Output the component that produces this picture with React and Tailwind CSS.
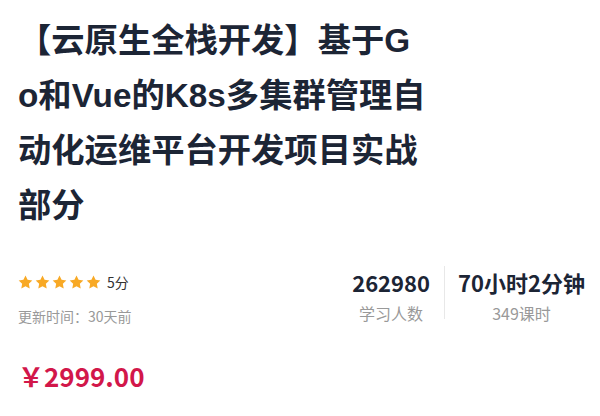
import React from "react";

const Star = () => (
  <svg width="15" height="14" viewBox="0 0 24 23" className="block">
    <path
      d="M12 0.8l3.4 7.1 7.8 1-5.7 5.4 1.4 7.7L12 18.3 5.1 22l1.4-7.7L0.8 8.9l7.8-1z"
      fill="#f8a925"
    />
  </svg>
);

export default function App() {
  const font = { fontFamily: '"Noto Sans CJK SC", "Noto Sans", sans-serif' };
  const titleFont = { fontFamily: '"Liberation Sans", "Noto Sans CJK SC", sans-serif' };
  return (
    <div className="w-[600px] h-[416px] bg-white overflow-hidden" style={font}>
      <div className="pl-[18px] pt-[13px]">
        <h1
          className="w-[409px] text-[33.3px] leading-[55px] font-bold text-[#1c2535] break-all"
          style={titleFont}
        >
          【云原生全栈开发】基于Go和Vue的K8s多集群管理自动化运维平台开发项目实战部分
        </h1>
      </div>
      <div className="flex pl-[18px] pr-[2px] mt-[39px]">
        <div className="flex flex-col">
          <div className="flex items-center h-[20px]">
            <div className="flex gap-[2px]">
              <Star />
              <Star />
              <Star />
              <Star />
              <Star />
            </div>
            <span className="ml-[6px] text-[14px] leading-[20px] text-[#333]">5分</span>
          </div>
          <div className="mt-[14px] text-[14px] leading-[20px] text-[#999]">更新时间：30天前</div>
        </div>
        <div className="ml-auto flex">
          <div className="flex flex-col items-center px-[14px] mt-[-3px]">
            <div className="text-[22px] leading-[26px] font-bold text-[#1c2535]">262980</div>
            <div className="mt-[7px] text-[16px] leading-[22px] text-[#999]">学习人数</div>
          </div>
          <div className="w-px h-[53px] bg-[#e8e8e8] mt-[-6px]"></div>
          <div className="flex flex-col items-center px-[13px] mt-[-3px]">
            <div className="text-[22px] leading-[26px] font-bold text-[#1c2535]">70小时2分钟</div>
            <div className="mt-[7px] text-[16px] leading-[22px] text-[#999]">349课时</div>
          </div>
        </div>
      </div>
      <div className="pl-[18px] mt-[34px] text-[26px] leading-[32px] font-bold text-[#d2174a]">
        ￥2999.00
      </div>
    </div>
  );
}
